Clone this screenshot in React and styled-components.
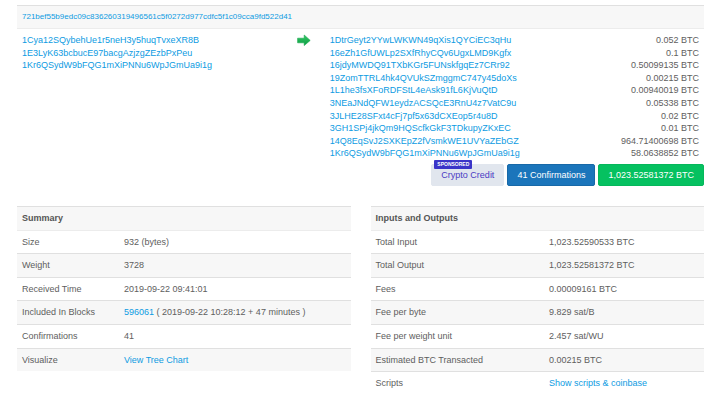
import React from "react"
import styled, { createGlobalStyle } from "styled-components"

const GlobalStyle = createGlobalStyle`
  * {
    box-sizing: border-box;
  }
  body {
    margin: 0;
    background: #fff;
    color: #5e5e5e;
    font-family: "Liberation Sans", Helvetica, Arial, sans-serif;
    font-size: 9px;
    line-height: 1.4;
  }
`

const Page = styled.main`
  padding: 5px 16px 0 17px;
`

const Link = styled.a`
  color: #0d9be2;
  text-decoration: none;
`

const Transaction = styled.table`
  width: 100%;
  table-layout: fixed;
  border-collapse: separate;
  border-spacing: 0;
  .inputs {
    width: 40%;
  }
  .direction {
    width: 33px;
  }
  th {
    height: 24px;
    padding: 0 5px 1px;
    background: #f7f7f7;
    border-top: 1px solid #e0e0e0;
    border-bottom: 1px solid #ececec;
    font-size: 8px;
    font-weight: 400;
    text-align: left;
  }
  td {
    padding: 5px 5px 4px;
    vertical-align: top;
  }
`

const AddressList = styled.ul`
  margin: 0;
  padding: 0;
  list-style: none;
  li {
    display: flex;
    justify-content: space-between;
  }
`

const Arrow = styled.svg`
  display: block;
  width: 14px;
  height: 12px;
`

const Actions = styled.div`
  display: flex;
  justify-content: flex-end;
  gap: 3px;
`

const Button = styled.button`
  position: relative;
  height: 22px;
  padding: 0 9px;
  border: 1px solid ${(props) => props.$border};
  border-radius: 2px;
  background: ${(props) => props.$background};
  color: ${(props) => props.$color || "#fff"};
  font-family: inherit;
  font-size: 9px;
`

const Badge = styled.span`
  position: absolute;
  top: -5px;
  left: 2px;
  padding: 0 3px;
  border-radius: 1px;
  background: #3b35c8;
  color: #fff;
  font-size: 5px;
  font-weight: 700;
  line-height: 9px;
`

const Details = styled.section`
  display: grid;
  grid-template-columns: 1fr 1fr;
  align-items: start;
  gap: 20px;
  margin-top: 20px;
`

const DetailTable = styled.table`
  width: 100%;
  table-layout: fixed;
  border-collapse: separate;
  border-spacing: 0;
  .label {
    width: ${(props) => props.$labelWidth};
  }
  th,
  td {
    padding: 5px;
    border-top: 1px solid #e0e0e0;
    font-weight: 400;
    text-align: left;
  }
  thead th {
    border-bottom: 1px solid #ececec;
    background: #f7f7f7;
    font-weight: 700;
    color: #555;
  }
  tbody tr:first-child > * {
    border-top: 0;
  }
  tbody tr:nth-child(even) {
    background: #f7f7f7;
  }
`

const hash = "721bef55b9edc09c836260319496561c5f0272d977cdfc5f1c09cca9fd522d41"

const inputs = [
  "1Cya12SQybehUe1r5neH3y5huqTvxeXR8B",
  "1E3LyK63bcbucE97bacgAzjzgZEzbPxPeu",
  "1Kr6QSydW9bFQG1mXiPNNu6WpJGmUa9i1g",
]

const outputs = [
  ["1DtrGeyt2YYwLWKWN49qXis1QYCiEC3qHu", "0.052 BTC"],
  ["16eZh1GfUWLp2SXfRhyCQv6UgxLMD9Kgfx", "0.1 BTC"],
  ["16jdyMWDQ91TXbKGr5FUNskfgqEz7CRr92", "0.50099135 BTC"],
  ["19ZomTTRL4hk4QVUkSZmggmC747y45doXs", "0.00215 BTC"],
  ["1L1he3fsXFoRDFStL4eAsk91fL6KjVuQtD", "0.00940019 BTC"],
  ["3NEaJNdQFW1eydzACSQcE3RnU4z7VatC9u", "0.05338 BTC"],
  ["3JLHE28SFxt4cFj7pf5x63dCXEop5r4u8D", "0.02 BTC"],
  ["3GH1SPj4jkQm9HQScfkGkF3TDkupyZKxEC", "0.01 BTC"],
  ["14Q8EqSvJ2SXKEpZ2fVsmkWE1UVYaZEbGZ", "964.71400698 BTC"],
  ["1Kr6QSydW9bFQG1mXiPNNu6WpJGmUa9i1g", "58.0638852 BTC"],
]

const summary = [
  ["Size", "932 (bytes)"],
  ["Weight", "3728"],
  ["Received Time", "2019-09-22 09:41:01"],
  [
    "Included In Blocks",
    <>
      <Link href="#block">596061</Link> ( 2019-09-22 10:28:12 + 47 minutes )
    </>,
  ],
  ["Confirmations", "41"],
  ["Visualize", <Link href="#tree">View Tree Chart</Link>],
]

const totals = [
  ["Total Input", "1,023.52590533 BTC"],
  ["Total Output", "1,023.52581372 BTC"],
  ["Fees", "0.00009161 BTC"],
  ["Fee per byte", "9.829 sat/B"],
  ["Fee per weight unit", "2.457 sat/WU"],
  ["Estimated BTC Transacted", "0.00215 BTC"],
  ["Scripts", <Link href="#scripts">Show scripts &amp; coinbase</Link>],
]

const DetailPanel = ({ title, rows, labelWidth }) => (
  <DetailTable $labelWidth={labelWidth}>
    <colgroup>
      <col className="label" />
      <col />
    </colgroup>
    <thead>
      <tr>
        <th colSpan={2}>{title}</th>
      </tr>
    </thead>
    <tbody>
      {rows.map(([label, value]) => (
        <tr key={label}>
          <th scope="row">{label}</th>
          <td>{value}</td>
        </tr>
      ))}
    </tbody>
  </DetailTable>
)

const App = () => {
  return (
    <Page>
      <GlobalStyle />
      <Transaction>
        <colgroup>
          <col className="inputs" />
          <col className="direction" />
          <col />
        </colgroup>
        <thead>
          <tr>
            <th colSpan={3}>
              <Link href="#tx">{hash}</Link>
            </th>
          </tr>
        </thead>
        <tbody>
          <tr>
            <td>
              <AddressList>
                {inputs.map((address) => (
                  <li key={address}>
                    <Link href="#address">{address}</Link>
                  </li>
                ))}
              </AddressList>
            </td>
            <td>
              <Arrow viewBox="0 0 14 12" aria-hidden="true">
                <defs>
                  <linearGradient id="arrow" x1="0" y1="0" x2="0" y2="1">
                    <stop offset="0" stopColor="#35c866" />
                    <stop offset="1" stopColor="#0b9c43" />
                  </linearGradient>
                </defs>
                <path
                  d="M0.6 4.2h6.6V1L13.2 6.4 7.2 11.6V8.8H0.6z"
                  fill="url(#arrow)"
                  stroke="#18a84c"
                  strokeWidth="0.6"
                  strokeLinejoin="round"
                />
              </Arrow>
            </td>
            <td>
              <AddressList>
                {outputs.map(([address, amount]) => (
                  <li key={address}>
                    <Link href="#address">{address}</Link>
                    <span>{amount}</span>
                  </li>
                ))}
              </AddressList>
            </td>
          </tr>
        </tbody>
      </Transaction>
      <Actions>
        <Button $background="#e1e6ee" $border="#e1e6ee" $color="#4b3cc4">
          <Badge>SPONSORED</Badge>
          Crypto Credit
        </Button>
        <Button $background="#1b75bb" $border="#1869a8">
          41 Confirmations
        </Button>
        <Button $background="#05c160" $border="#05b75b">
          1,023.52581372 BTC
        </Button>
      </Actions>
      <Details>
        <DetailPanel title="Summary" rows={summary} labelWidth="102px" />
        <DetailPanel title="Inputs and Outputs" rows={totals} labelWidth="52%" />
      </Details>
    </Page>
  )
}

export default App
